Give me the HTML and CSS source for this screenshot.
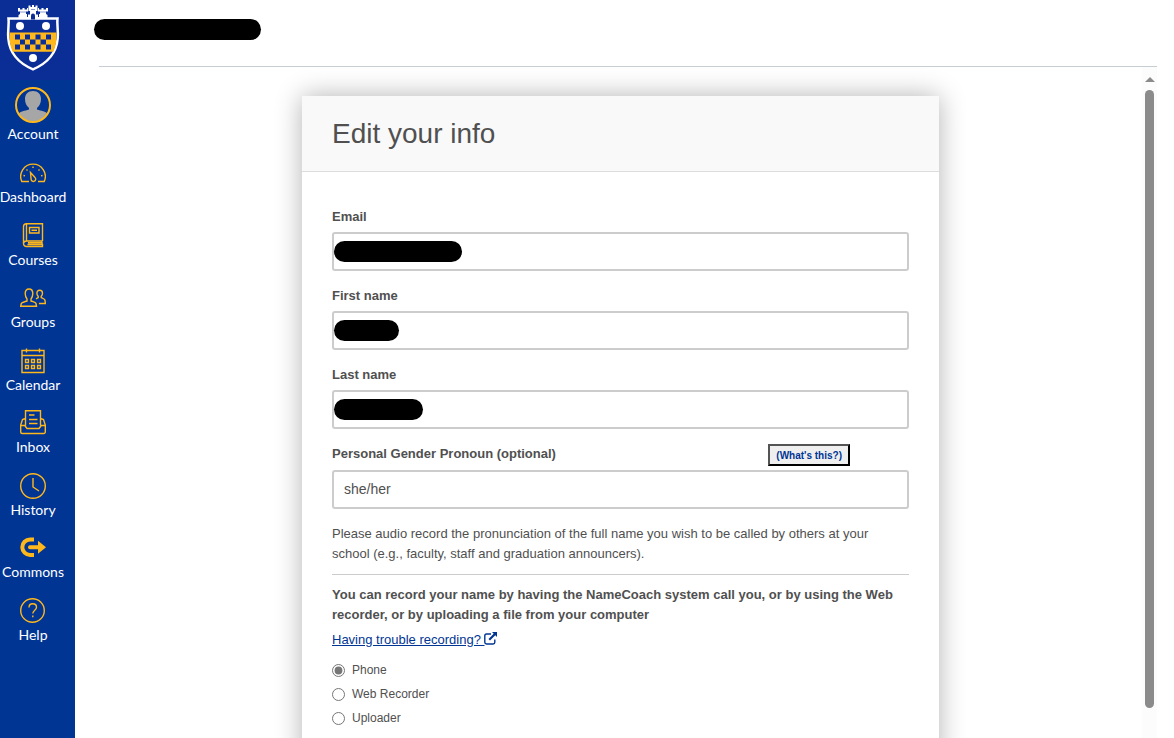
FILE: index.html
```html
<!DOCTYPE html>
<html lang="en">
<head>
    <meta charset="UTF-8">
    <meta name="viewport" content="width=device-width, initial-scale=1.0">
    <title>Edit your info</title>
    <link rel="stylesheet" href="styles.css">
</head>
<body>
    <nav class="sidebar">
        <a href="#" class="logo" aria-label="Home">
            <svg width="66" height="80" viewBox="0 0 66 80">
                <path d="M18 8h2v1.500h2.500V8h2v1.500H27V8h1v3.500h-2V14h1v3h1v-2.500h2V11h-1.500V5.500h2V7h1.500V5h2v2h1.500V5.500h2V11H36v3.500h2V17h1v-3h1v-2.500h-2V8h1v1.500h2.500V8h2v1.500H46V8h2v3.500h-2V14l1.500 1v4h-29v-4l1.500-1v-2.500h-2z" fill="#fff"/>
                <path d="M20 12h6M31 9.500h4M40 12h6" stroke="#8e9dd0" stroke-width="1"/>
                <path d="M8.500 18.500h49c-.8 6 1 12 .2 20C56.500 52 48 63 33 69.300 18 63 9.500 52 8.300 38.500 7.500 30.500 9.300 24.500 8.500 18.500z" fill="#0a2d96" stroke="#fff" stroke-width="2.500"/>
                <path d="M9.500 32.500h47c.4 7-.5 13.500-3.200 19.200H12.700C10 46 9.100 39.500 9.500 32.500z" fill="#ffb81c"/>
                <path d="M15 34.500h5v5h-5zM25 34.500h5v5h-5zM35.500 34.500h5v5h-5zM46 34.500h5v5h-5zM20 39.500h5v5h-5zM30 39.500h5.500v5H30zM40.500 39.500H46v5h-5.500zM15 44.500h5v5h-5zM25 44.500h5v5h-5zM35.500 44.500h5v5h-5zM46 44.500h5v5h-5z" fill="#0a2d96"/>
                <path d="M31 19.500v-4a2 2 0 0 1 4 0v4z" fill="#0a2d96"/>
                <circle cx="20" cy="26" r="4" fill="#fff"/>
                <circle cx="46" cy="26" r="4" fill="#fff"/>
                <circle cx="33" cy="58" r="4" fill="#fff"/>
            </svg>
        </a>
        <a href="#" class="nav-link account">
            <svg width="36" height="36" viewBox="0 0 36 36">
                <defs>
                    <clipPath id="avatar"><circle cx="18" cy="18" r="16.500"/></clipPath>
                </defs>
                <g clip-path="url(#avatar)" fill="#a6a6a6">
                    <path d="M18 4c5 0 8 3 8 8 0 4-1.500 7-4 9v1.500c4 1.500 9 1.500 10.500 4.500L36 36H0l3.500-9c1.500-3 6.500-3 10.500-4.500V21c-2.500-2-4-5-4-9 0-5 3-8 8-8z"/>
                </g>
                <circle cx="18" cy="18" r="17" fill="none" stroke="#ffb81c" stroke-width="2"/>
            </svg>
            <span>Account</span>
        </a>
        <ul class="nav-list">
            <li>
                <a href="#" class="nav-link">
                    <svg class="icon" viewBox="0 0 26 26">
                        <path d="M9 21.500H1.800A12.300 12.300 0 1 1 24.200 21.500H18"/>
                        <path d="M10.500 12.500l4.500 5a2.300 2.300 0 1 1-3.900 1.800zM3.500 15.500l1.500.4M6.500 9.500l1 1M13 6.500V8M19.500 9.500l-1 1M22.500 15.500l-1.500.4"/>
                    </svg>
                    <span>Dashboard</span>
                </a>
            </li>
            <li>
                <a href="#" class="nav-link">
                    <svg class="icon" viewBox="0 0 26 26">
                        <path d="M22.500 18V.7H6.500a3 3 0 0 0-3 3V20a3 3 0 0 0 3 3.500h16v-2H7.500M22.500 18H6.500a3 3 0 0 0-3 2.500M6.500 1v17M22 18.500v3M8 19.800h14M9.500 4.500h9.500v5.500H9.500zM11.500 7.200h5.500"/>
                    </svg>
                    <span>Courses</span>
                </a>
            </li>
            <li>
                <a href="#" class="nav-link">
                    <svg class="icon" viewBox="0 0 26 26">
                        <path d="M7 14c-1.200-1.500-1.800-3.300-1.800-5.500C5.200 5.500 6.500 4 9 4s3.800 1.500 3.800 4.500c0 2.200-.6 4-1.800 5.500v2c2 .9 4.500.9 5 2.500l.5 2.800H.7L1.300 18.500C2 16.900 5 16.900 7 16z"/>
                        <path d="M16 13.800l2.200-1.300V11.300c-1-1-1.300-2-1.300-3.100 0-1.900 1-2.900 2.800-2.900s2.800 1 2.800 2.900c0 1.100-.3 2.100-1.300 3.100v1.400c1.600.9 3.200 1 3.700 2.300l.5 3.500h-6.500"/>
                    </svg>
                    <span>Groups</span>
                </a>
            </li>
            <li>
                <a href="#" class="nav-link">
                    <svg class="icon" viewBox="0 0 26 26">
                        <path d="M2 2.500h22v22H2zM2 7.500h22M6.500.5v4M19.500.5v4M5.500 11.500h3v3h-3zM11.500 11.500h3v3h-3zM17.500 11.500h3v3h-3zM5.500 17.500h3v3h-3zM11.500 17.500h3v3h-3zM17.500 17.500h3v3h-3z"/>
                    </svg>
                    <span>Calendar</span>
                </a>
            </li>
            <li>
                <a href="#" class="nav-link">
                    <svg class="icon" viewBox="0 0 26 26">
                        <path d="M5.500 15.500V.7h15v14.800M5.500 8.500l-3 1L.7 15v7a1.500 1.500 0 0 0 1.500 1.500h21.600a1.500 1.500 0 0 0 1.500-1.500v-7l-1.800-5.500-3-1M.7 15.500h4l2.300 3h12l2.300-3h4M9 5h5.500M9 9.500h8.500M9 13.500h8.500"/>
                    </svg>
                    <span>Inbox</span>
                </a>
            </li>
            <li>
                <a href="#" class="nav-link">
                    <svg class="icon" viewBox="0 0 26 26">
                        <circle cx="13" cy="13" r="12.300"/>
                        <path d="M13 5v9l6 4"/>
                    </svg>
                    <span>History</span>
                </a>
            </li>
            <li>
                <a href="#" class="nav-link">
                    <svg class="icon" viewBox="0 0 26 26">
                        <path d="M14 4.500H10a7.700 7.700 0 0 0 0 15.400h4" stroke-width="4"/>
                        <path d="M10 12.200h9" stroke-width="4" stroke-linecap="round"/>
                        <path d="M18 5.700l8 6.500-8 6.500z" fill="#ffb81c" stroke="none"/>
                    </svg>
                    <span>Commons</span>
                </a>
            </li>
            <li>
                <a href="#" class="nav-link">
                    <svg class="icon" viewBox="0 0 26 26">
                        <circle cx="12.500" cy="12.500" r="11.800"/>
                        <path d="M9 9.500c0-2.300 1.500-3.700 3.700-3.700s3.800 1.400 3.800 3.400c0 3-3.700 3-3.700 6.300M12.800 17.500v1.800"/>
                    </svg>
                    <span>Help</span>
                </a>
            </li>
        </ul>
    </nav>

    <div class="page">
        <header class="top">
            <span class="redacted redacted-title"></span>
        </header>
        <div class="frame">
            <main class="scroll-area">
                <form class="card">
                    <div class="card-header">
                        <h1>Edit your info</h1>
                    </div>
                    <div class="card-body">
                        <div class="field">
                            <label for="email">Email</label>
                            <div class="input-wrap">
                                <input type="email" id="email">
                                <span class="redacted redacted-email"></span>
                            </div>
                        </div>
                        <div class="field">
                            <label for="first-name">First name</label>
                            <div class="input-wrap">
                                <input type="text" id="first-name">
                                <span class="redacted redacted-first"></span>
                            </div>
                        </div>
                        <div class="field">
                            <label for="last-name">Last name</label>
                            <div class="input-wrap">
                                <input type="text" id="last-name">
                                <span class="redacted redacted-last"></span>
                            </div>
                        </div>
                        <div class="field">
                            <div class="label-row">
                                <label for="pronoun">Personal Gender Pronoun (optional)</label>
                                <button type="button" class="hint-btn">(What's this?)</button>
                            </div>
                            <input type="text" id="pronoun" value="she/her">
                        </div>
                        <p class="note">Please audio record the pronunciation of the full name you wish to be called by others at your school (e.g., faculty, staff and graduation announcers).</p>
                        <hr>
                        <p class="record-text">You can record your name by having the NameCoach system call you, or by using the Web recorder, or by uploading a file from your computer</p>
                        <p class="trouble">
                            <a href="#">Having trouble recording? <svg width="13" height="13" viewBox="0 0 13 13"><path d="M7 2H2.500Q.8 2 .8 3.700v6.600Q.8 12 2.500 12h6.600q1.700 0 1.700-1.700V7.500" fill="none" stroke="#003594" stroke-width="1.400"/><path d="M8 0h5v5l-1.700-1.700L6 8.500 4.500 7l5.200-5.300z" fill="#003594"/></svg></a>
                        </p>
                        <div class="options">
                            <label><input type="radio" name="method" checked>Phone</label>
                            <label><input type="radio" name="method">Web Recorder</label>
                            <label><input type="radio" name="method">Uploader</label>
                        </div>
                    </div>
                </form>
            </main>
            <div class="scrollbar">
                <span class="scroll-arrow"></span>
                <span class="scroll-thumb"></span>
            </div>
        </div>
    </div>
</body>
</html>
```

FILE: styles.css
```css
* {
    box-sizing: border-box;
}
body {
    margin: 0;
    display: flex;
    height: 100vh;
    overflow: hidden;
    background: #fff;
    color: #505050;
    font-family: Arial, "Liberation Sans", sans-serif;
    font-size: 13px;
    line-height: 20px;
}

/* sidebar */
.sidebar {
    flex: none;
    width: 75px;
    background: #003594;
    overflow: hidden;
}
.logo {
    display: block;
    height: 80px;
    background: #0a2d96;
}
.logo svg {
    display: block;
}
.nav-link {
    display: flex;
    flex-direction: column;
    align-items: center;
    width: 66px;
    padding-top: 5px;
    color: #fff;
    font-family: Lato, sans-serif;
    font-size: 14px;
    line-height: 22px;
    text-decoration: none;
}
.account {
    height: 75px;
    padding-top: 7px;
}
.nav-list {
    display: grid;
    grid-auto-rows: 1fr;
    height: 500px;
    margin: 0;
    padding: 0;
    list-style: none;
}
.icon {
    width: 26px;
    height: 26px;
    fill: none;
    stroke: #ffb81c;
    stroke-width: 1.4;
}

/* page */
.page {
    flex: 1;
    display: flex;
    flex-direction: column;
    min-width: 0;
    padding: 0 17px 0 24px;
}
.top {
    display: flex;
    align-items: flex-start;
    height: 67px;
    padding-top: 19px;
    border-bottom: 1px solid #c7cdd1;
}
.redacted {
    height: 21px;
    border-radius: 11px;
    background: #000;
}
.redacted-title {
    width: 167px;
    margin-left: -5px;
}
.frame {
    flex: 1;
    display: flex;
    min-height: 0;
}
.scroll-area {
    flex: 1;
    overflow: hidden;
    padding-top: 29px;
}
.card {
    max-width: 637px;
    min-height: 100%;
    margin: 0 auto;
    background: #fff;
    box-shadow: 0 0 25px rgba(0, 0, 0, 0.3);
}
.card-header {
    padding: 20px 30px;
    background: #f9f9f9;
    border-bottom: 1px solid #ddd;
}
.card-header h1 {
    margin: 0;
    font-size: 28px;
    font-weight: normal;
    line-height: 35px;
}
.card-body {
    padding: 35px 30px;
}

/* form */
.field {
    margin-bottom: 15px;
}
.field label {
    display: block;
    margin-bottom: 5px;
    font-weight: bold;
}
.field input {
    display: block;
    width: 100%;
    height: 39px;
    padding: 0 10px 2px;
    border: 2px solid #ccc;
    border-radius: 3px;
    background: #fff;
    color: #505050;
    font-family: inherit;
    font-size: 14px;
}
.input-wrap {
    position: relative;
}
.input-wrap .redacted {
    position: absolute;
    top: 9px;
    left: 2px;
}
.redacted-email {
    width: 128px;
}
.redacted-first {
    width: 65px;
}
.redacted-last {
    width: 89px;
}
.label-row {
    display: flex;
    justify-content: space-between;
    align-items: center;
    margin-bottom: 4px;
    padding-right: 59px;
}
.label-row label {
    margin-bottom: 2px;
}
.hint-btn {
    height: 22px;
    padding: 0 6px;
    border: 2px outset #000;
    background: #efefef;
    color: #003594;
    font-family: inherit;
    font-size: 10px;
    font-weight: bold;
}
.note {
    margin: 0 0 10px;
}
hr {
    margin: 0 0 10px;
    border: 0;
    border-top: 1px solid #ccc;
}
.record-text {
    margin: 0 0 5px;
    font-weight: bold;
}
.trouble {
    margin: 0 0 8px;
}
.trouble a {
    color: #003594;
}
.trouble svg {
    vertical-align: -1px;
}
.options label {
    display: flex;
    align-items: center;
    gap: 7px;
    height: 24px;
    font-size: 12px;
}
.options input {
    width: 13px;
    height: 13px;
    margin: 0;
    accent-color: #767676;
}

/* scrollbar */
.scrollbar {
    display: flex;
    flex-direction: column;
    align-items: center;
    width: 15px;
    padding: 10px 0 30px;
    background: #fcfcfc;
}
.scroll-arrow {
    margin-bottom: 8px;
    border: 5px solid transparent;
    border-top: 0;
    border-bottom-color: #8b8b8b;
}
.scroll-thumb {
    flex: 1;
    width: 9px;
    border-radius: 5px;
    background: #8b8b8b;
}
```
